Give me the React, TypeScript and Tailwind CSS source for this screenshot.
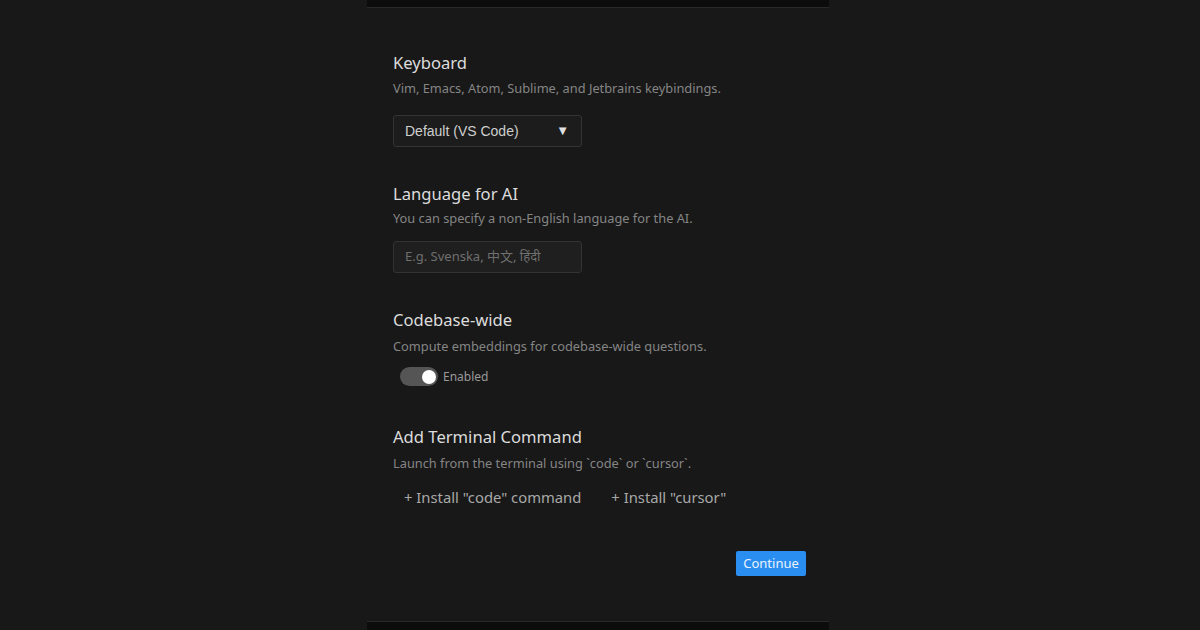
import React from "react";

const sans = { fontFamily: '"Noto Sans", "Open Sans", sans-serif' } as const;

export default function App() {
  return (
    <div className="h-[630px] w-full bg-[#181818] flex justify-center overflow-hidden pr-[4px]" style={sans}>
      <div className="w-[462px] h-full flex flex-col">
        <div className="h-[8px] bg-[#0c0c0c] border-b border-[#2a2a2a] shrink-0" />
        <div className="flex-1 flex flex-col pl-[26px] pr-[23px] pt-[43px]">
          {/* Keyboard */}
          <div className="text-[16.6px] leading-[24px] text-[#dcdcdc]">Keyboard</div>
          <div className="mt-[4px] text-[12.8px] leading-[18px] text-[#858585]">
            Vim, Emacs, Atom, Sublime, and Jetbrains keybindings.
          </div>
          <div
            className="mt-[18px] w-[189px] h-[32px] rounded-[3px] border border-[#333333] bg-[#1c1c1c] flex items-center justify-between pl-[11px] pr-[12px] text-[14px] text-[#cfcfcf]"
            style={{ fontFamily: '"Liberation Sans", Arial, sans-serif' }}
          >
            <span>Default (VS Code)</span>
            <span className="text-[13px] text-[#e0e0e0]">▼</span>
          </div>

          {/* Language */}
          <div className="mt-[35px] text-[16.6px] leading-[24px] text-[#dcdcdc]">Language for AI</div>
          <div className="mt-[3px] text-[12.8px] leading-[18px] text-[#858585]">
            You can specify a non-English language for the AI.
          </div>
          <div className="mt-[14px] w-[189px] h-[32px] rounded-[3px] border border-[#333333] bg-[#1f1f1f] flex items-center pl-[11px] text-[13px] text-[#6f6f6f]"
            style={{ fontFamily: '"Noto Sans", "Noto Sans CJK SC", sans-serif' }}
          >
            E.g. Svenska, 中文, हिंदी
          </div>

          {/* Codebase */}
          <div className="mt-[35px] text-[16.6px] leading-[24px] text-[#dcdcdc]">Codebase-wide</div>
          <div className="mt-[5px] text-[12.8px] leading-[18px] text-[#858585]">
            Compute embeddings for codebase-wide questions.
          </div>
          <div className="mt-[12px] ml-[7px] flex items-center gap-[5px] h-[19px]">
            <div className="w-[38px] h-[19px] rounded-full bg-[#555555] flex items-center justify-end pr-[2px]">
              <div className="w-[14px] h-[14px] rounded-full bg-white" />
            </div>
            <span className="text-[12px] text-[#9a9a9a]">Enabled</span>
          </div>

          {/* Terminal */}
          <div className="mt-[39px] text-[16.6px] leading-[24px] text-[#dcdcdc]">Add Terminal Command</div>
          <div className="mt-[5px] text-[12.8px] leading-[18px] text-[#858585]">
            Launch from the terminal using `code` or `cursor`.
          </div>
          <div className="mt-[14px] flex items-center pl-[11px] gap-[30px] text-[14.8px] leading-[22px] text-[#a8a8a8]">
            <span>+ Install "code" command</span>
            <span>+ Install "cursor"</span>
          </div>

          <div className="mt-[43px] flex justify-end">
            <button className="w-[70px] h-[25px] rounded-[2px] bg-[#2a8ef0] text-[13px] text-[#e8f3ff] flex items-center justify-center">
              Continue
            </button>
          </div>
        </div>
        <div className="h-[9px] bg-[#0c0c0c] border-t border-[#2a2a2a] shrink-0" />
      </div>
    </div>
  );
}
